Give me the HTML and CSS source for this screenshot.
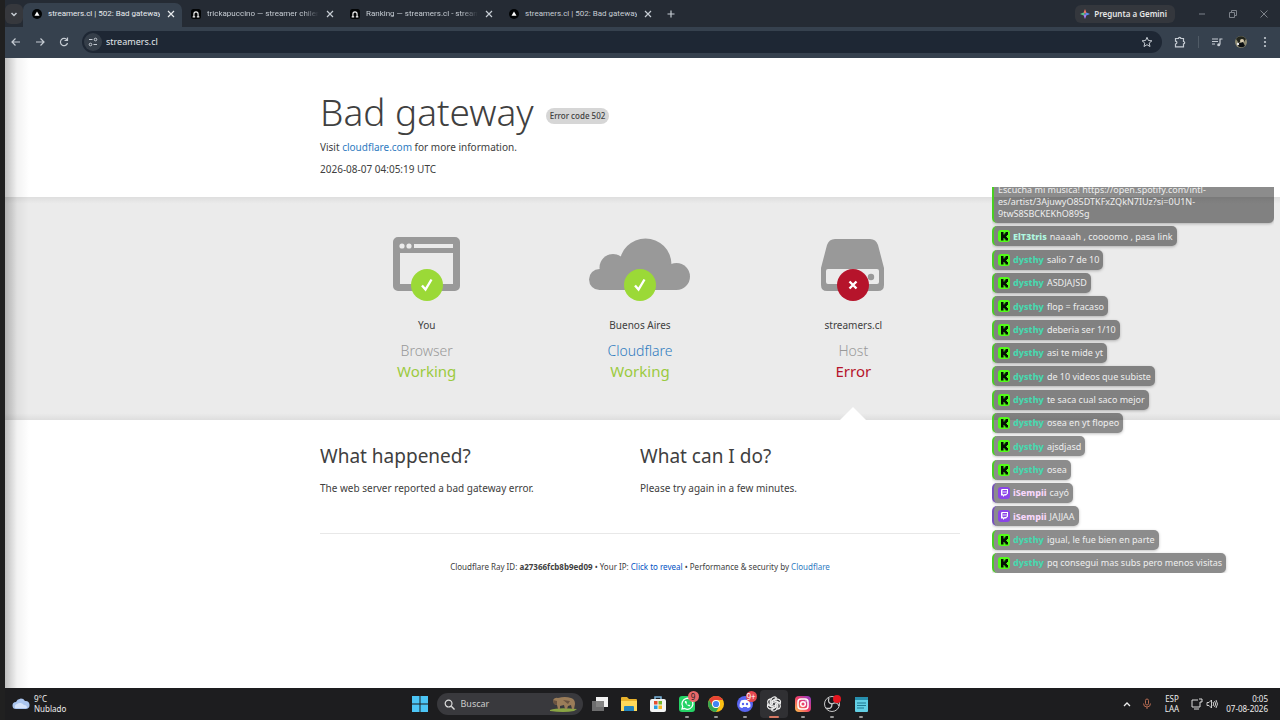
FILE: index.html
```html
<!DOCTYPE html>
<html lang="en">
<head>
    <meta charset="UTF-8">
    <meta name="viewport" content="width=device-width, initial-scale=1.0">
    <title>streamers.cl | 502: Bad gateway</title>
    <link rel="stylesheet" href="styles.css">
</head>
<body>
    <!-- shared icons -->
    <svg class="sprite" aria-hidden="true">
        <symbol id="x" viewBox="0 0 10 10"><path d="M2 2l6 6M8 2L2 8" fill="none" stroke="currentColor" stroke-width="1.2"/></symbol>
        <symbol id="site" viewBox="0 0 12 12"><circle cx="6" cy="6" r="6" fill="#020405"/><path d="M6 3l3 5H3z" fill="#fff"/></symbol>
        <symbol id="arch" viewBox="0 0 12 12"><rect width="12" height="12" rx="3" fill="#020405"/><path d="M3.500 9.500V6a2.500 2.500 0 0 1 5 0v3.500M2 9.500h3M7 9.500h3" fill="none" stroke="#eee" stroke-width="1.400"/></symbol>
        <symbol id="kick" viewBox="0 0 12 12"><rect width="12" height="12" rx="3" fill="#53fc18"/><path d="M3 2h2.500v2.500h1V3.300h1V2H10v3H9v1.200H8V7h1v1h1v2.500H7.500V9.300h-1V8h-1v2.500H3z" fill="#041004"/></symbol>
        <symbol id="twitch" viewBox="0 0 12 12"><rect width="12" height="12" rx="3" fill="#8b44e8"/><path d="M3.500 2H10v4.500L8 8.500H6.500L5 10V8.500H3V3.500z" fill="#fff"/><path d="M4.500 3H9v3L8 7H6.500l-1 1V7h-1z" fill="#8b44e8"/><path d="M6 4v2M8 4v2" stroke="#fff" stroke-width=".8"/></symbol>
        <symbol id="ok" viewBox="0 0 32 32"><circle cx="16" cy="16" r="16" fill="#9bd937"/><path d="M11 16.500l3.500 4L20.500 10.500" fill="none" stroke="#fff" stroke-width="2.400"/></symbol>
        <symbol id="fail" viewBox="0 0 32 32"><circle cx="16" cy="16" r="16" fill="#b6142b"/><path d="M12.500 12.500l7 7M19.500 12.500l-7 7" fill="none" stroke="#fff" stroke-width="2.400"/></symbol>
    </svg>

    <header class="browser">
        <div class="tab-strip">
            <button class="tab-search" aria-label="Search tabs"><svg viewBox="0 0 10 10"><path d="M2.500 4L5 6.500 7.500 4" fill="none" stroke="currentColor" stroke-width="1.500"/></svg></button>
            <div class="tab active"><svg class="favicon"><use href="#site"/></svg><span>streamers.cl | 502: Bad gateway</span><button aria-label="Close"><svg><use href="#x"/></svg></button></div>
            <div class="tab fade"><svg class="favicon"><use href="#arch"/></svg><span>trickapuccino — streamer chileno</span><button aria-label="Close"><svg><use href="#x"/></svg></button></div>
            <div class="tab fade"><svg class="favicon"><use href="#arch"/></svg><span>Ranking — streamers.cl - streamers</span><button aria-label="Close"><svg><use href="#x"/></svg></button></div>
            <div class="tab"><svg class="favicon"><use href="#site"/></svg><span>streamers.cl | 502: Bad gateway</span><button aria-label="Close"><svg><use href="#x"/></svg></button></div>
            <button class="new-tab" aria-label="New tab"><svg viewBox="0 0 10 10"><path d="M5 1.500v7M1.500 5h7" stroke="currentColor" stroke-width="1.200"/></svg></button>
            <button class="gemini"><svg viewBox="0 0 12 12"><path d="M6 0L4.300 4.300 6 6l1.700-1.700z" fill="#ec7565"/><path d="M0 6l4.300-1.700L6 6 4.300 7.700z" fill="#5ac48b"/><path d="M12 6L7.700 4.300 6 6l1.700 1.700z" fill="#5a8df0"/><path d="M6 12l1.700-4.300L6 6 4.300 7.700z" fill="#a67df0"/></svg>Pregunta a Gemini</button>
            <div class="window-buttons">
                <button aria-label="Minimize"><svg viewBox="0 0 10 10"><path d="M2 5h6" stroke="currentColor"/></svg></button>
                <button aria-label="Restore"><svg viewBox="0 0 10 10"><path d="M1.500 3.500h5v5h-5zM3.500 3.500v-2h5v5h-2" fill="none" stroke="currentColor"/></svg></button>
                <button aria-label="Close window"><svg viewBox="0 0 10 10"><path d="M1.500 1.500l7 7M8.500 1.500l-7 7" stroke="currentColor"/></svg></button>
            </div>
        </div>
        <div class="toolbar">
            <button aria-label="Back"><svg viewBox="0 0 12 12"><path d="M10 6H2M5.500 2.500L2 6l3.500 3.500" fill="none" stroke="currentColor" stroke-width="1.200"/></svg></button>
            <button aria-label="Forward"><svg viewBox="0 0 12 12"><path d="M2 6h8M6.500 2.500L10 6 6.500 9.500" fill="none" stroke="currentColor" stroke-width="1.200"/></svg></button>
            <button aria-label="Reload"><svg viewBox="0 0 12 12"><path d="M9 4A3.600 3.600 0 1 0 9.500 7M9.500 1.500v3H6.500" fill="none" stroke="currentColor" stroke-width="1.200"/></svg></button>
            <div class="omnibox">
                <button class="site-info" aria-label="Site information"><svg viewBox="0 0 12 12"><path d="M2 3.500h3.500M6.500 8.500H10" stroke="currentColor" stroke-width="1.200"/><circle cx="8.500" cy="3.500" r="1.300" fill="none" stroke="currentColor"/><circle cx="3.500" cy="8.500" r="1.300" fill="none" stroke="currentColor"/></svg></button>
                <input type="text" value="streamers.cl" aria-label="Address">
                <button aria-label="Bookmark"><svg viewBox="0 0 12 12"><path d="M6 1.300l1.400 3.200 3.500.3-2.700 2.300.8 3.400-3-1.800-3 1.800.8-3.400L1.100 4.800l3.500-.3z" fill="none" stroke="currentColor"/></svg></button>
            </div>
            <button aria-label="Extensions"><svg viewBox="0 0 12 12"><path d="M1.500 2.500h3a1.200 1.200 0 0 1 2.400 0h2.600v3a1.200 1.200 0 0 1 0 2.400v3h-8V8a1.400 1.400 0 0 0 0-2.800z" fill="none" stroke="currentColor" stroke-width="1.200"/></svg></button>
            <span class="divider"></span>
            <button aria-label="Media"><svg viewBox="0 0 12 12"><path d="M1 3h6M1 5.500h6M1 8h3M9 8.500V3h2.500" fill="none" stroke="currentColor" stroke-width="1.200"/><circle cx="7.700" cy="8.700" r="1.500" fill="currentColor"/></svg></button>
            <button aria-label="Profile"><svg viewBox="0 0 12 12"><circle cx="6" cy="6" r="6" fill="#8d8a72"/><path d="M1 3a6 6 0 0 1 10 0L9 6H3z" fill="#23261e"/><circle cx="7" cy="5" r="2" fill="#d9cdb2"/><path d="M3 6l2 1 3-1 2 4a6 6 0 0 1-7 0z" fill="#0b0e10"/><circle cx="3" cy="8" r="1.200" fill="#eee"/></svg></button>
            <button aria-label="Menu"><svg viewBox="0 0 12 12"><g fill="currentColor"><circle cx="6" cy="2" r="1.100"/><circle cx="6" cy="6" r="1.100"/><circle cx="6" cy="10" r="1.100"/></g></svg></button>
        </div>
    </header>

    <main class="page">
        <section class="container intro">
            <h1>Bad gateway <span class="code">Error code 502</span></h1>
            <p>Visit <a href="#">cloudflare.com</a> for more information.</p>
            <p>2026-08-07 04:05:19 UTC</p>
        </section>

        <section class="status">
            <div class="container status-grid">
                <div class="status-item">
                    <div class="status-icon">
                        <svg class="picture" viewBox="0 0 102 56"><path fill="#999" fill-rule="evenodd" d="M22 0h57a5 5 0 0 1 5 5v44a5 5 0 0 1-5 5H22a5 5 0 0 1-5-5V5a5 5 0 0 1 5-5zm2 16v31h53V16zm14-9v4h39V7z"/><circle cx="26" cy="9" r="2.600" fill="#ebebeb"/><circle cx="33" cy="9" r="2.600" fill="#ebebeb"/></svg>
                        <svg class="mark"><use href="#ok"/></svg>
                    </div>
                    <span class="where">You</span>
                    <h3>Browser</h3>
                    <span class="state working">Working</span>
                </div>
                <div class="status-item">
                    <div class="status-icon">
                        <svg class="picture" viewBox="0 0 102 56"><g fill="#999"><circle cx="56.500" cy="27.500" r="26"/><circle cx="24" cy="30.500" r="13.500"/><circle cx="10.500" cy="42.500" r="10.500"/><circle cx="87.500" cy="39.500" r="13.500"/><path d="M10 34l12-10h54l12 8v21H10z"/></g></svg>
                        <svg class="mark"><use href="#ok"/></svg>
                    </div>
                    <span class="where">Buenos Aires</span>
                    <h3><a href="#">Cloudflare</a></h3>
                    <span class="state working">Working</span>
                </div>
                <div class="status-item host">
                    <div class="status-icon">
                        <svg class="picture" viewBox="0 0 102 56"><path fill="#999" fill-rule="evenodd" d="M33 2h35q6 0 8 6l6 23v17q0 6-6 6H25q-6 0-6-6V31l6-23q2-6 8-6zM26 32q-2 0-2 2v11q0 2 2 2h49q2 0 2-2V34q0-2-2-2z"/><circle cx="69" cy="40" r="3.200" fill="#999"/></svg>
                        <svg class="mark"><use href="#fail"/></svg>
                    </div>
                    <span class="where">streamers.cl</span>
                    <h3>Host</h3>
                    <span class="state error">Error</span>
                </div>
            </div>
        </section>

        <section class="container explain">
            <div>
                <h2>What happened?</h2>
                <p>The web server reported a bad gateway error.</p>
            </div>
            <div>
                <h2>What can I do?</h2>
                <p>Please try again in a few minutes.</p>
            </div>
        </section>

        <footer class="container ray">
            Cloudflare Ray ID: <strong>a27366fcb8b9ed09</strong> • Your IP: <button class="reveal">Click to reveal</button> • Performance &amp; security by <a href="#">Cloudflare</a>
        </footer>

        <!-- stream chat laid over the page -->
        <aside class="chat">
            <div class="msg long">Escucha mi musica! https://open.spotify.com/intl-<br>es/artist/3AjuwyO85DTKFxZQkN7IUz?si=0U1N-<br>9twS8SBCKEKhO89Sg</div>
            <div class="msg"><svg><use href="#kick"/></svg><b class="mint">ElT3tris</b> naaaah , coooomo , pasa link</div>
            <div class="msg"><svg><use href="#kick"/></svg><b>dysthy</b> salio 7 de 10</div>
            <div class="msg"><svg><use href="#kick"/></svg><b>dysthy</b> ASDJAJSD</div>
            <div class="msg"><svg><use href="#kick"/></svg><b>dysthy</b> flop = fracaso</div>
            <div class="msg"><svg><use href="#kick"/></svg><b>dysthy</b> deberia ser 1/10</div>
            <div class="msg"><svg><use href="#kick"/></svg><b>dysthy</b> asi te mide yt</div>
            <div class="msg"><svg><use href="#kick"/></svg><b>dysthy</b> de 10 videos que subiste</div>
            <div class="msg"><svg><use href="#kick"/></svg><b>dysthy</b> te saca cual saco mejor</div>
            <div class="msg"><svg><use href="#kick"/></svg><b>dysthy</b> osea en yt flopeo</div>
            <div class="msg"><svg><use href="#kick"/></svg><b>dysthy</b> ajsdjasd</div>
            <div class="msg"><svg><use href="#kick"/></svg><b>dysthy</b> osea</div>
            <div class="msg tw"><svg><use href="#twitch"/></svg><b>iSempii</b> cayó</div>
            <div class="msg tw"><svg><use href="#twitch"/></svg><b>iSempii</b> JAJJAA</div>
            <div class="msg"><svg><use href="#kick"/></svg><b>dysthy</b> igual, le fue bien en parte</div>
            <div class="msg"><svg><use href="#kick"/></svg><b>dysthy</b> pq consegui mas subs pero menos visitas</div>
        </aside>
    </main>

    <footer class="taskbar">
        <button class="weather">
            <svg viewBox="0 0 18 14"><path d="M4 12a3.500 3.500 0 0 1 0-7 5 5 0 0 1 9-1 4 4 0 0 1 1 8z" fill="#a9c4ee"/><path d="M3 11a3 3 0 0 1 2-4 5 5 0 0 1 7 1 3 3 0 0 1 3 3z" fill="#d5e3fa"/></svg>
            <span>9°C<br>Nublado</span>
        </button>
        <nav class="apps">
            <button aria-label="Start"><svg viewBox="0 0 18 18"><path d="M1 1h7.500v7.500H1zM9.500 1H17v7.500H9.500zM1 9.500h7.500V17H1zM9.500 9.500H17V17H9.500z" fill="#4cc5f5"/></svg></button>
            <label class="search">
                <svg viewBox="0 0 12 12"><circle cx="5" cy="5" r="3.700" fill="none" stroke="#ddd" stroke-width="1.300"/><path d="M8 8l3.500 3.500" stroke="#ddd" stroke-width="1.500"/></svg>
                <input type="text" placeholder="Buscar" aria-label="Buscar">
                <svg class="animal" viewBox="0 0 30 18"><path d="M1 15q8-3 27-1l-3 2q-10 2-24 0z" fill="#8aa544"/><path d="M4 5q2-3 5-2 7-2 13 0 4 1 4 6l-1 5h-2l-1-4-3 1-1 3h-2l-1-4-4 1v3H9l-1-4-3-1z" fill="#9b7d59"/><path d="M4 5l4 1v4L5 9zM14 5l7 1-2 3z" fill="#6a5340"/></svg>
            </label>
            <button aria-label="Task view"><svg viewBox="0 0 18 18"><path d="M5 2h12v10H5z" fill="#f2f2f2"/><path d="M1 6h12v10H1z" fill="#777" opacity=".9"/></svg></button>
            <button aria-label="Explorer"><svg viewBox="0 0 18 18"><path d="M1 3q0-1 1-1h5l2 2h7q1 0 1 1v11H1z" fill="#e8b22c"/><path d="M1 6h16v10H1z" fill="#ffd95a"/><path d="M4 16v-4q0-1 1-1h8q1 0 1 1v4z" fill="#2484bd"/></svg></button>
            <button aria-label="Store"><svg viewBox="0 0 18 18"><path d="M6 5V2h6v3" fill="none" stroke="#7bb5dd" stroke-width="1.500"/><rect x="1" y="4" width="16" height="13" rx="2" fill="#f3f4f4"/><path d="M5 6h3.500v3.500H5z" fill="#e65030"/><path d="M9.500 6H13v3.500H9.500z" fill="#76b82a"/><path d="M5 10.500h3.500V14H5z" fill="#299fe0"/><path d="M9.500 10.500H13V14H9.500z" fill="#f5b721"/></svg></button>
            <button class="running" aria-label="WhatsApp"><svg viewBox="0 0 18 18"><rect x="1" y="1" width="16" height="16" rx="3" fill="#25d366"/><path d="M4 14l.7-2.500A5.500 5.500 0 1 1 6.700 13.500z" fill="none" stroke="#fff" stroke-width="1.300"/><path d="M7 6q-1 1 1 3t3.500 2.500l.8-1.200-1.500-.8-.8.700-1.500-1.500.5-.8L8.300 6z" fill="#fff"/></svg><span class="badge">9</span></button>
            <button class="running" aria-label="Chrome"><svg viewBox="0 0 18 18"><circle cx="9" cy="9" r="8" fill="#fbbf13"/><path d="M2.100 5A8 8 0 0 1 16 5H9a4 4 0 0 0-3.500 6z" fill="#e84435"/><path d="M2.100 5A8 8 0 0 0 9 17l3.500-6A4 4 0 0 1 5.500 11z" fill="#34a653"/><circle cx="9" cy="9" r="4" fill="#fff"/><circle cx="9" cy="9" r="3.100" fill="#4285f4"/></svg></button>
            <button class="running" aria-label="Discord"><svg viewBox="0 0 18 18"><circle cx="9" cy="9" r="8" fill="#5865f2"/><path d="M5 5.500q4-1.500 8 0 1.500 3 1.500 6-1.500 1.500-3 1.500l-.7-1H7.200l-.7 1q-1.500 0-3-1.500 0-3 1.500-6z" fill="#fff"/><circle cx="7" cy="9" r="1.200" fill="#5865f2"/><circle cx="11" cy="9" r="1.200" fill="#5865f2"/></svg><span class="badge unread">9+</span></button>
            <button class="running current" aria-label="ChatGPT"><svg viewBox="0 0 18 18"><g fill="none" stroke="#eee" stroke-width="1.200"><path id="petal" d="M6 10.700V5.200a3.200 3.200 0 0 1 5.600-2.100L7.500 5.500V9"/><use href="#petal" transform="rotate(60 9 9)"/><use href="#petal" transform="rotate(120 9 9)"/><use href="#petal" transform="rotate(180 9 9)"/><use href="#petal" transform="rotate(240 9 9)"/><use href="#petal" transform="rotate(300 9 9)"/></g></svg></button>
            <button class="running" aria-label="Instagram"><svg viewBox="0 0 18 18"><defs><linearGradient id="insta" x1="0" y1="1" x2="1" y2="0"><stop offset="0" stop-color="#ffc54b"/><stop offset=".5" stop-color="#ee3f67"/><stop offset="1" stop-color="#8a3bd1"/></linearGradient></defs><rect x="1" y="1" width="16" height="16" rx="4" fill="url(#insta)"/><g fill="none" stroke="#fff" stroke-width="1.500"><rect x="4" y="4" width="10" height="10" rx="3"/><circle cx="9" cy="9" r="2.300"/></g><circle cx="12" cy="6" r=".7" fill="#fff"/></svg></button>
            <button class="running" aria-label="OBS"><svg viewBox="0 0 18 18"><circle cx="9" cy="9" r="7.500" fill="#17171b" stroke="#c9c9c9"/><g fill="none" stroke="#c9c9c9" stroke-width="1.300"><path d="M9 9Q4 8 6 3M9 9q5-3 7 2M9 9q0 6-6 4"/></g><circle cx="14" cy="4" r="4" fill="#e51620"/></svg></button>
            <button class="running" aria-label="Notepad"><svg viewBox="0 0 18 18"><rect x="3" y="2" width="13" height="15" rx="1" fill="#62cfe4"/><path d="M3 2h13v3H3z" fill="#278fae"/><path d="M5 8h9M5 10.500h9M5 13h7" stroke="#1f7890" stroke-width="1.200"/></svg></button>
        </nav>
        <div class="tray">
            <button aria-label="Hidden icons"><svg viewBox="0 0 12 12"><path d="M3 8l3-3 3 3" fill="none" stroke="#eee" stroke-width="1.300"/></svg></button>
            <button aria-label="Microphone"><svg viewBox="0 0 12 12"><rect x="4.500" y="1" width="3" height="6" rx="1.500" fill="none" stroke="#b66b52"/><path d="M2.500 5.500a3.500 3.500 0 0 0 7 0M6 9v2" fill="none" stroke="#b66b52"/></svg></button>
            <span class="lang">ESP<br>LAA</span>
            <div class="devices">
                <svg viewBox="0 0 12 12"><path d="M7 2H1v7h8V6M3 11h5M8 1h3v3H9v2" fill="none" stroke="#ddd"/></svg>
                <svg viewBox="0 0 12 12"><path d="M1 4.500h2L5.500 2v8L3 7.500H1zM7 4q1.500 2 0 4M8.500 3q2.500 3 0 6M10 2q3 4 0 8" fill="none" stroke="#ddd" stroke-width=".9"/></svg>
            </div>
            <span class="clock">0:05<br>07-08-2026</span>
        </div>
    </footer>
</body>
</html>
```
FILE: styles.css
```css
* { box-sizing: border-box; }
body { margin: 0; min-height: 100vh; display: flex; flex-direction: column; font-family: "Noto Sans", sans-serif; font-size: 10px; color: #404040; background: #fff; }
button, input { font: inherit; color: inherit; background: none; border: 0; padding: 0; margin: 0; }
button { cursor: pointer; display: flex; align-items: center; justify-content: center; }
a { color: #2f7bbf; text-decoration: none; }
h1, h2, h3, p { margin: 0; font-weight: 400; }
svg { flex: none; }
.sprite { position: absolute; width: 0; height: 0; }

/* browser chrome */
.browser { background: #36414e; color: #c6ccd3; padding-left: 5px; }
.tab-strip { display: flex; align-items: center; height: 27px; background: #252b34; font-size: 8px; }
.tab-strip svg { width: 10px; height: 10px; }
.tab-search { width: 18px; height: 20px; background: #36383d; border-radius: 6px; }
.tab { display: flex; align-items: center; gap: 6px; width: 159px; height: 24px; padding: 0 6px 0 9px; font-family: Roboto, sans-serif; }
.tab span { flex: 1; overflow: hidden; white-space: nowrap; }
.tab.active { background: #36414e; border-radius: 7px 7px 0 0; align-self: flex-end; padding-bottom: 3px; color: #e8ebee; }
.tab.fade span { mask-image: linear-gradient(90deg, #000 85%, transparent); }
.new-tab { width: 24px; height: 20px; }
.gemini { margin-left: auto; gap: 4px; height: 18px; padding: 0 8px 0 5px; border-radius: 6px; background: #34373d; font-weight: 600; color: #e6e6e6; }
.window-buttons { display: flex; gap: 21px; padding: 0 11px 0 22px; color: #7d828a; }
.toolbar { display: flex; align-items: center; gap: 12px; height: 31px; padding: 0 9px 2px 5px; }
.toolbar svg { width: 12px; height: 12px; display: block; }
.omnibox { flex: 1; display: flex; align-items: center; gap: 4px; height: 22px; padding: 0 9px 0 2px; border-radius: 11px; background: #1e2734; }
.omnibox input { flex: 1; min-width: 0; font-size: 9px; color: #e3e7eb; }
.site-info { width: 18px; height: 18px; border-radius: 50%; background: #353e49; }
.divider { width: 1px; height: 12px; background: #505b66; }

/* error page */
.page { flex: 1; position: relative; }
.page::before { content: ""; position: absolute; z-index: 1; top: 0; bottom: 0; left: 5px; width: 24px; background: linear-gradient(90deg, rgba(0, 0, 0, 0.25), rgba(0, 0, 0, 0.05) 50%, transparent); }
body::before { content: ""; position: absolute; z-index: 2; top: 0; left: 0; width: 5px; height: 100%; background: #202020; }
.container { width: 50%; min-width: 640px; margin: 0 auto; }
.intro { padding: 28px 0 19px; }
.intro h1 { display: flex; align-items: center; gap: 12px; font-size: 37px; line-height: 52px; font-weight: 300; }
.code { padding: 0 4px; margin-top: 8px; border-radius: 8px; background: #d6d6d6; font-size: 8px; line-height: 16px; font-weight: 500; }
.intro p { line-height: 18px; margin-bottom: 4px; }
.intro p:last-child { margin-bottom: 0; }
.status { background: linear-gradient(#dedede, #ebebeb 3%, #ebebeb 97%, #dedede); }
.status-grid { display: grid; grid-template-columns: repeat(3, 1fr); height: 223px; }
.status-item { display: flex; flex-direction: column; align-items: center; position: relative; padding-top: 40px; }
.status-icon { position: relative; height: 79px; }
.picture { width: 102px; height: 56px; display: block; }
.mark { position: absolute; left: 35px; top: 32px; width: 32px; height: 32px; }
.where { line-height: 18px; }
.status-item h3 { font-size: 14px; line-height: 21px; margin-top: 6px; font-weight: 300; color: #999; }
.state { font-size: 15px; line-height: 21px; }
.working { color: #9bca3e; }
.error { color: #b6142b; }
.host::after { content: ""; position: absolute; bottom: 0; left: 50%; margin-left: -13px; border: 13px solid transparent; border-top: 0; border-bottom-color: #fff; }
.explain { display: grid; grid-template-columns: 1fr 1fr; padding: 21px 0 36px; border-bottom: 1px solid #e8e8e8; }
.explain h2 { font-size: 19px; line-height: 30px; margin-bottom: 8px; }
.explain p { line-height: 18px; }
.ray { padding-top: 26px; line-height: 14px; font-size: 8px; text-align: center; }
.reveal { display: inline; color: #0051c3; }

.chat { position: absolute; z-index: 3; top: 129px; right: 6px; width: 282px; height: 386px; overflow: hidden; display: flex; flex-direction: column; justify-content: space-between; align-items: flex-start; font-size: 9px; color: #eee; }
.msg { display: flex; align-items: center; gap: 3px; height: 20px; padding: 0 4px; border-left: 2px solid #49cf21; border-radius: 5px; background: rgba(0, 0, 0, 0.45); box-shadow: 0 1px 3px rgba(0, 0, 0, 0.25); white-space: nowrap; }
.msg svg { width: 12px; height: 12px; }
.msg b { font-weight: 800; color: #48d8ae; }
.msg b.mint { color: #b0f8e0; }
.msg.tw { border-left-color: #7650bd; }
.msg.tw b { color: #f7d7fb; }
.msg.long { display: block; width: 100%; height: auto; flex: none; margin-top: -8px; padding: 5px 4px 3px; line-height: 12px; }

/* windows taskbar */
.taskbar { display: grid; grid-template-columns: 1fr auto 1fr; align-items: center; height: 32px; background: #1d1d1f; color: #eee; font-size: 8px; line-height: 10px; }
.weather { justify-self: start; gap: 4px; padding-left: 12px; text-align: left; }
.weather svg { width: 18px; height: 14px; }
.apps { display: flex; align-items: center; gap: 1px; }
.apps button { position: relative; width: 28px; height: 28px; border-radius: 4px; }
.apps button > svg { width: 18px; height: 18px; }
.search { display: flex; align-items: center; gap: 6px; width: 146px; height: 22px; margin: 0 2px; padding: 0 4px 0 7px; border-radius: 11px; background: #39393d; }
.search svg { width: 11px; height: 11px; }
.search input { flex: 1; min-width: 0; font-size: 9px; }
.search input::placeholder { color: #ccc; }
.search .animal { width: 30px; height: 18px; }
.running::after { content: ""; position: absolute; bottom: 0; left: 12px; width: 4px; height: 2px; border-radius: 1px; background: #999; }
.current { background: #303033; }
.current::after { left: 9px; width: 10px; background: #d67863; }
.badge { position: absolute; top: 1px; right: 2px; min-width: 11px; height: 11px; border-radius: 6px; background: #e8686b; color: #222; line-height: 11px; text-align: center; }
.badge.unread { background: #e5484f; color: #fff; }
.tray { justify-self: end; display: flex; align-items: center; gap: 8px; padding-right: 12px; text-align: center; }
.tray svg { width: 12px; height: 12px; display: block; }
.lang { margin: 0 4px; }
.devices { display: flex; gap: 3px; }
.clock { text-align: right; }
```
